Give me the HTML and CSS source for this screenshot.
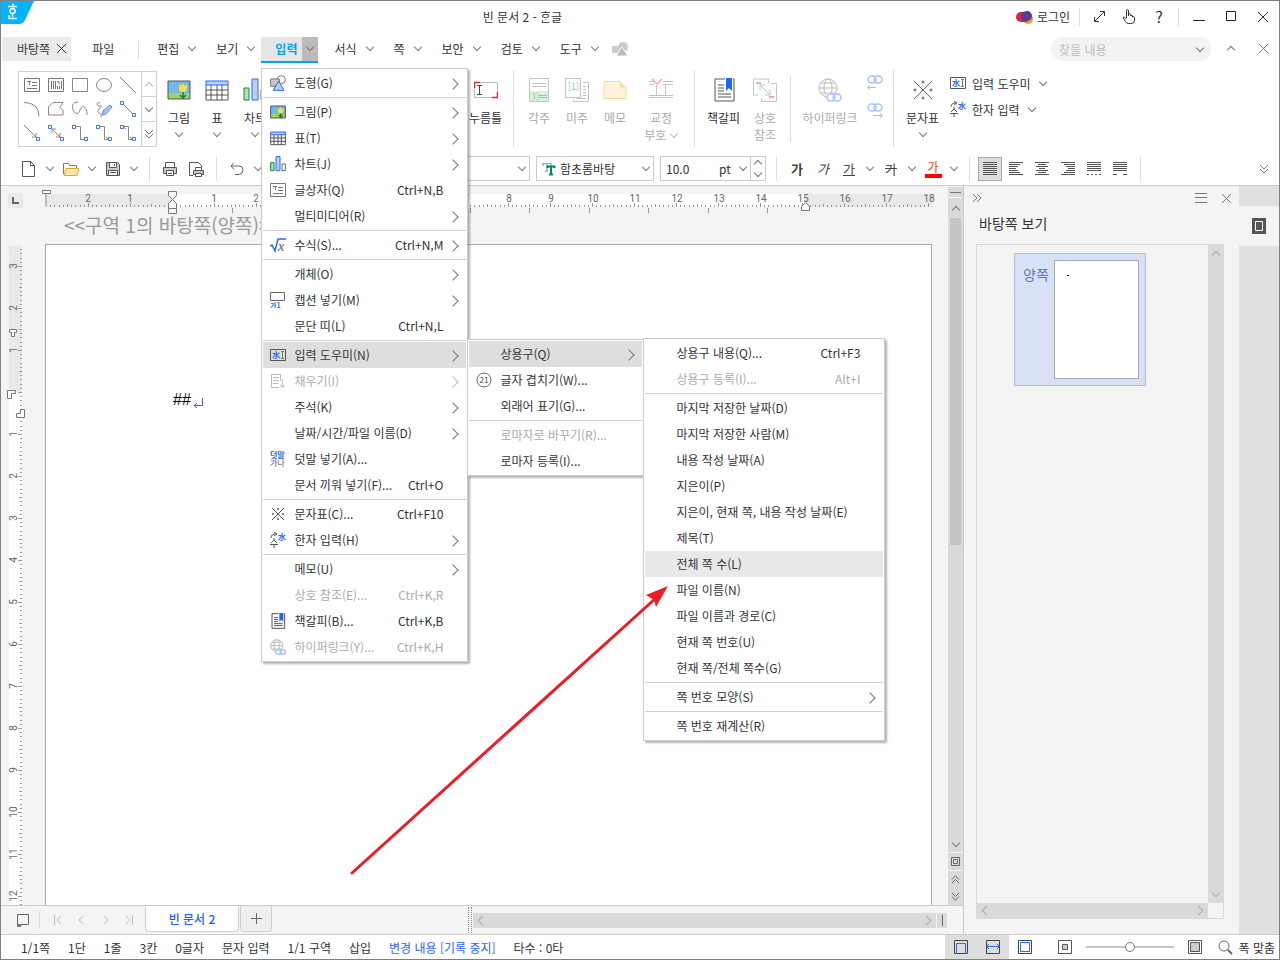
FILE: index.html
```html
<!DOCTYPE html>
<html lang="ko">
<head>
  <meta charset="UTF-8">
  <title>빈 문서 2 - 한글</title>
  <link rel="stylesheet" href="styles.css">
</head>
<body>

  <!-- icon sprite -->
  <svg class="sprite" width="0" height="0">
    <symbol id="i-shape" viewBox="0 0 24 24"><circle cx="17" cy="7" r="6" fill="#fff" stroke="#777"/><path d="M1 6h13v11H1z" fill="#c8c8c8" stroke="#777"/><path d="M13 9l8 14H5z" fill="#b9d0ff" stroke="#2a6bf2"/></symbol>
    <symbol id="i-picture" viewBox="0 0 24 24"><path d="M1 3h22v18H1z" fill="#6db9f0"/><path d="M1 15h22v6H1z" fill="#9ed267"/><path d="M16 13v8M16 20l-3-3M16 20l3-3" stroke="#15803a" stroke-width="1.500" fill="none"/><path d="M12 6l2 2 2-3 2 3 2-2v6l-2 2h-4l-2-2z" fill="#ffdf33"/><path d="M1 3h22v18H1z" fill="none" stroke="#555"/></symbol>
    <symbol id="i-table" viewBox="0 0 24 24"><path d="M1 7v15h22V7M1 12h22M1 17h22M6 7v15M12 7v15M17 7v15" fill="none" stroke="#555"/><path d="M1 3h22v4H1z" fill="#b9d0ff" stroke="#2a6bf2"/></symbol>
    <symbol id="i-chart" viewBox="0 0 24 24"><path d="M1 10h5v12H1z" fill="#b5e0bb" stroke="#188a2a"/><path d="M9 1h6v21H9z" fill="#b9d0ff" stroke="#2a6bf2"/><path d="M18 12h5v10h-5z" fill="#fff" stroke="#666"/></symbol>
    <symbol id="i-textbox" viewBox="0 0 16 16"><path d="M.5 1.500h15v13H.5zM3 4.500h4M5.500 5v3M8 5.500h5M8 8.500h5M3 11.500h10" fill="none" stroke="#777"/></symbol>
    <symbol id="i-vtext" viewBox="0 0 16 16"><path d="M.5 1.500h15v13H.5zM3.500 4v8M5.500 4v8M7.500 4v8M9.500 9v3M11.500 9v3M9 4.500h2v3M13.500 4v8" fill="none" stroke="#777"/></symbol>
    <symbol id="i-formula" viewBox="0 0 16 16"><path d="M0 9l2-1 3 6 3-12h8" fill="none" stroke="#2a6bf2" stroke-width="1.500"/><text x="8" y="14" font-size="14" font-style="italic" font-family="Liberation Serif, serif" fill="#555">x</text></symbol>
    <symbol id="i-caption" viewBox="0 0 16 16"><path d="M.5.5h14v8H.5z" fill="#fff" stroke="#666"/><text x="0" y="16" font-size="7" font-weight="bold" fill="#2a6bf2">가1</text></symbol>
    <symbol id="i-helper" viewBox="0 0 16 16"><path d="M.5 2.500h15v11H.5z" fill="none" stroke="#555"/><text x="2" y="11" font-size="8" font-weight="bold" fill="#2a6bf2">水</text><path d="M11 4.500h3M11 11.500h3M12.500 5v6" fill="none" stroke="#777"/></symbol>
    <symbol id="i-fill" viewBox="0 0 16 16"><path d="M9 14.500H1.500v-13h9V8M3 4.500h6M3 7.500h6M3 10.500h5" fill="none" stroke="#bbb"/><path d="M12.500 6v8M10 12l2.500 2.500L15 12" fill="none" stroke="#a9c3ff"/></symbol>
    <symbol id="i-ruby" viewBox="0 0 16 16"><text x="0" y="7" font-size="8" font-weight="bold" fill="#2a6bf2">덧말</text><text x="0" y="15" font-size="8" fill="#555">가나</text></symbol>
    <symbol id="i-chars" viewBox="0 0 16 16"><path d="M2 2l12 12M14 2L2 14" stroke="#555" fill="none"/><g fill="#555"><circle cx="8" cy="3" r="1"/><circle cx="8" cy="13" r="1"/><circle cx="3" cy="8" r="1"/><circle cx="13" cy="8" r="1"/></g></symbol>
    <symbol id="i-hanja" viewBox="0 0 16 16"><path d="M1 6c0-3 2-4 5-4M4 0l3 2-3 2" fill="none" stroke="#555"/><text x="8" y="8" font-size="8" font-weight="bold" fill="#2a6bf2">水</text><path d="M4 6v2L1 11M4 8l3 3M0 12.500h8M4 12v4" fill="none" stroke="#555"/></symbol>
    <symbol id="i-bookmark" viewBox="0 0 24 24"><path d="M13 1H3v22h19V1h-1M6 7h6M6 10h6M6 13h6M6 16h13M6 19h13" fill="none" stroke="#555"/><path d="M14 0h6v13l-3-3-3 3z" fill="#1f66ff"/></symbol>
    <symbol id="i-link" viewBox="0 0 24 24"><g fill="none" stroke="#bcbcbc"><circle cx="10" cy="10" r="9"/><ellipse cx="10" cy="10" rx="4" ry="9"/><path d="M1 10h18M3 5h14M3 15h14"/></g><path d="M8 16h16v8H8z" fill="#fff"/><g fill="none" stroke="#a9c3ff" stroke-width="1.500"><rect x="9" y="16" width="8" height="7" rx="3.500"/><rect x="15" y="16" width="8" height="7" rx="3.500"/></g></symbol>
    <symbol id="i-xref" viewBox="0 0 24 24"><path d="M5 17H0.500V1h15v4M18 5.500h5.500v18h-15v-3" fill="none" stroke="#c4c4c4"/><path d="M3 4h5v2H3zM16 18h5v2h-5z" fill="#f3aca4"/><path d="M8 8l8 8M7 12V7h5M17 12v5h-5" fill="none" stroke="#a9c3ff"/></symbol>
    <symbol id="i-links" viewBox="0 0 16 16"><g fill="none" stroke="#a9c3ff" stroke-width="1.500"><rect x="1" y="1" width="8" height="7" rx="3.500"/><rect x="7" y="1" width="8" height="7" rx="3.500"/></g></symbol>
    <symbol id="i-double" viewBox="0 0 10 10"><path d="M1 1l4 4 4-4M1 5l4 4 4-4" fill="none" stroke="currentColor"/></symbol>
    <symbol id="i-close" viewBox="0 0 12 12"><path d="M1 1l10 10M11 1L1 11" fill="none" stroke="currentColor"/></symbol>
  </svg>

  <header class="title-bar">
    <svg class="logo" width="33" height="23" viewBox="0 0 33 23"><path d="M0 0h33l-9 19q-2 4-6 4H0z" fill="#00b4ff"/><g fill="none" stroke="#fff" stroke-width="1.500"><path d="M11 3.500h2M7 5.500h9M11.500 13v3M8 14v3.500h8"/><circle cx="11.500" cy="10" r="2.500"/></g></svg>
    <h1>빈 문서 2 - ᄒᆞᆫ글</h1>
    <button class="login">
      <svg width="17" height="14" viewBox="0 0 17 14"><circle cx="12" cy="9" r="5" fill="#f79a1c"/><circle cx="5" cy="7" r="5" fill="#d8234a"/><path d="M5 2h6v10H5z" fill="#8a3478"/><circle cx="11" cy="6" r="5" fill="#553d9c"/></svg>
      로그인
    </button>
    <span class="sep"></span>
    <button class="tb-btn" aria-label="전체 화면"><svg width="13" height="13" viewBox="0 0 13 13"><path d="M1.500 11.500l10-10M7 1.500h4.500V6M1.500 7v4.500H6" fill="none" stroke="#333"/></svg></button>
    <button class="tb-btn" aria-label="터치"><svg width="14" height="15" viewBox="0 0 14 15"><path d="M4.500 9V2q0-1.500 1-1.500T6.500 2v5V5q2-1 2 .5v1q2-1 2 .5v1q2-1 2 .5v3q0 3-3 3h-3q-2 0-3-2L1 8.500q1-1.500 3.500 1.500" fill="none" stroke="#333"/></svg></button>
    <button class="tb-btn help" aria-label="도움말">?</button>
    <span class="sep"></span>
    <button class="win-btn" aria-label="최소화"><svg width="12" height="12"><path d="M0 9.500h12" stroke="#222"/></svg></button>
    <button class="win-btn" aria-label="최대화"><svg width="12" height="12"><path d="M1.500.5h9v9h-9z" fill="none" stroke="#222"/></svg></button>
    <button class="win-btn" aria-label="닫기"><svg width="12" height="12"><use href="#i-close"/></svg></button>
  </header>

  <nav class="menu-bar">
    <div class="doc-tab"><button>바탕쪽</button><button aria-label="닫기"><svg width="11" height="11"><use href="#i-close"/></svg></button></div>
    <button class="file">파일</button>
    <span class="sep"></span>
    <button class="top-item">편집<i class="chev"></i></button>
    <button class="top-item">보기<i class="chev"></i></button>
    <div class="top-active">
      <button class="name">입력</button>
      <button class="drop" aria-label="펼치기"><i class="chev"></i></button>

      <ul class="menu menu-main">
        <li><button class="has-sub"><svg><use href="#i-shape"/></svg><span>도형(G)</span></button></li>
        <li class="line"></li>
        <li><button class="has-sub"><svg><use href="#i-picture"/></svg><span>그림(P)</span></button></li>
        <li><button class="has-sub"><svg><use href="#i-table"/></svg><span>표(T)</span></button></li>
        <li><button class="has-sub"><svg><use href="#i-chart"/></svg><span>차트(J)</span></button></li>
        <li><button><svg><use href="#i-textbox"/></svg><span>글상자(Q)</span><kbd>Ctrl+N,B</kbd></button></li>
        <li><button class="has-sub"><span>멀티미디어(R)</span></button></li>
        <li class="line"></li>
        <li><button class="has-sub"><svg><use href="#i-formula"/></svg><span>수식(S)...</span><kbd>Ctrl+N,M</kbd></button></li>
        <li class="line"></li>
        <li><button class="has-sub"><span>개체(O)</span></button></li>
        <li><button class="has-sub"><svg><use href="#i-caption"/></svg><span>캡션 넣기(M)</span></button></li>
        <li><button><span>문단 띠(L)</span><kbd>Ctrl+N,L</kbd></button></li>
        <li class="line"></li>
        <li>
          <button class="has-sub open"><svg><use href="#i-helper"/></svg><span>입력 도우미(N)</span></button>
          <ul class="menu menu-helper">
            <li>
              <button class="has-sub open"><span>상용구(Q)</span></button>
              <ul class="menu menu-phrase">
                <li><button><span>상용구 내용(Q)...</span><kbd>Ctrl+F3</kbd></button></li>
                <li><button disabled><span>상용구 등록(I)...</span><kbd>Alt+I</kbd></button></li>
                <li class="line"></li>
                <li><button><span>마지막 저장한 날짜(D)</span></button></li>
                <li><button><span>마지막 저장한 사람(M)</span></button></li>
                <li><button><span>내용 작성 날짜(A)</span></button></li>
                <li><button><span>지은이(P)</span></button></li>
                <li><button><span>지은이, 현재 쪽, 내용 작성 날짜(E)</span></button></li>
                <li><button><span>제목(T)</span></button></li>
                <li><button class="hover"><span>전체 쪽 수(L)</span></button></li>
                <li><button><span>파일 이름(N)</span></button></li>
                <li><button><span>파일 이름과 경로(C)</span></button></li>
                <li><button><span>현재 쪽 번호(U)</span></button></li>
                <li><button><span>현재 쪽/전체 쪽수(G)</span></button></li>
                <li class="line"></li>
                <li><button class="has-sub"><span>쪽 번호 모양(S)</span></button></li>
                <li class="line"></li>
                <li><button><span>쪽 번호 재계산(R)</span></button></li>
              </ul>
            </li>
            <li><button><svg viewBox="0 0 16 16"><circle cx="8" cy="8" r="7" fill="none" stroke="#666"/><text x="8" y="11" font-size="8" text-anchor="middle" fill="#444">21</text></svg><span>글자 겹치기(W)...</span></button></li>
            <li><button><span>외래어 표기(G)...</span></button></li>
            <li class="line"></li>
            <li><button disabled><span>로마자로 바꾸기(R)...</span></button></li>
            <li><button><span>로마자 등록(I)...</span></button></li>
          </ul>
        </li>
        <li><button class="has-sub" disabled><svg><use href="#i-fill"/></svg><span>채우기(I)</span></button></li>
        <li><button class="has-sub"><span>주석(K)</span></button></li>
        <li><button class="has-sub"><span>날짜/시간/파일 이름(D)</span></button></li>
        <li><button><svg><use href="#i-ruby"/></svg><span>덧말 넣기(A)...</span></button></li>
        <li><button><span>문서 끼워 넣기(F)...</span><kbd>Ctrl+O</kbd></button></li>
        <li class="line"></li>
        <li><button><svg><use href="#i-chars"/></svg><span>문자표(C)...</span><kbd>Ctrl+F10</kbd></button></li>
        <li><button class="has-sub"><svg><use href="#i-hanja"/></svg><span>한자 입력(H)</span></button></li>
        <li class="line"></li>
        <li><button class="has-sub"><span>메모(U)</span></button></li>
        <li><button disabled><span>상호 참조(E)...</span><kbd>Ctrl+K,R</kbd></button></li>
        <li><button><svg><use href="#i-bookmark"/></svg><span>책갈피(B)...</span><kbd>Ctrl+K,B</kbd></button></li>
        <li><button disabled><svg><use href="#i-link"/></svg><span>하이퍼링크(Y)...</span><kbd>Ctrl+K,H</kbd></button></li>
      </ul>
    </div>
    <button class="top-item">서식<i class="chev"></i></button>
    <button class="top-item">쪽<i class="chev"></i></button>
    <button class="top-item">보안<i class="chev"></i></button>
    <button class="top-item">검토<i class="chev"></i></button>
    <button class="top-item">도구<i class="chev"></i></button>
    <svg class="shape-tool" width="16" height="15" viewBox="0 0 16 15"><circle cx="11" cy="5" r="5" fill="#ccc"/><path d="M0 4h9v7H0z" fill="#ccc"/><path d="M10 5l6 9H4z" fill="#bbb" stroke="#fff"/></svg>
    <div class="search">
      <input type="text" aria-label="찾을 내용" placeholder="찾을 내용">
      <i class="chev"></i>
    </div>
    <button class="bar-btn" aria-label="접기"><i class="chev up"></i></button>
    <button class="bar-btn" aria-label="닫기"><svg width="11" height="11"><use href="#i-close"/></svg></button>
  </nav>

  <section class="ribbon">
    <div class="gallery">
      <div class="shapes">
        <svg><use href="#i-textbox"/></svg>
        <svg><use href="#i-vtext"/></svg>
        <svg viewBox="0 0 16 16"><path d="M.5 1.500h15v13H.5z"/></svg>
        <svg viewBox="0 0 16 16"><ellipse cx="8" cy="8" rx="7.500" ry="6.500"/></svg>
        <svg viewBox="0 0 16 16"><path d="M0 0l16 16"/></svg>
        <svg viewBox="0 0 16 16"><path d="M0 1.500q15 0 15 14"/></svg>
        <svg viewBox="0 0 16 16"><path d="M5 1.500h10l-3 5 3 3v4.500H.5V6z"/></svg>
        <svg viewBox="0 0 16 16"><path d="M6 1C0 1 0 6 1 9s5 6 7 0 7-4 7 5"/></svg>
        <svg viewBox="0 0 16 16"><path d="M4 2C0 0 0 6 4 5s-3 4-2 6 4 0 3 5"/><path class="pen" d="M6 14l1-4 7-6 2 2-6 7z"/></svg>
        <svg viewBox="0 0 16 16"><path d="M2 2l12 12"/><path class="dot" d="M.5.5h3v3h-3zM12.500 12.500h3v3h-3z"/></svg>
        <svg viewBox="0 0 16 16"><path d="M0 0l12 12M12 8v4H8"/><path class="dot" d="M12.500 12.500h3v3h-3z"/></svg>
        <svg viewBox="0 0 16 16"><path d="M4 4l9 9M4 8V4h4M12 8v4H8"/><path class="dot" d="M.5.5h3v3h-3zM12.500 12.500h3v3h-3z"/></svg>
        <svg viewBox="0 0 16 16"><path d="M3 1.500h5.500v13H13"/><path class="dot" d="M.5.5h3v3h-3zM12.500 12.500h3v3h-3z"/></svg>
        <svg viewBox="0 0 16 16"><path d="M3 1.500h5.500v13H13M10 12l3 2.500"/><path class="dot" d="M.5.5h3v3h-3zM12.500 12.500h3v3h-3z"/></svg>
        <svg viewBox="0 0 16 16"><path d="M3 1.500h5.500v13H13M10 12l3 2.500M6 4L3 1.500"/><path class="dot" d="M.5.5h3v3h-3zM12.500 12.500h3v3h-3z"/></svg>
      </div>
      <div class="gallery-nav">
        <button aria-label="위로" disabled><i class="chev up"></i></button>
        <button aria-label="아래로"><i class="chev"></i></button>
        <button aria-label="자세히"><svg width="10" height="10"><use href="#i-double"/></svg></button>
      </div>
    </div>

    <div class="group media">
      <button class="big"><svg><use href="#i-picture"/></svg>그림<i class="chev"></i></button>
      <button class="big"><svg><use href="#i-table"/></svg>표<i class="chev"></i></button>
      <button class="big"><svg><use href="#i-chart"/></svg>차트<i class="chev"></i></button>
    </div>
    <div class="group fields">
      <button class="big"><svg viewBox="0 0 24 24"><path d="M.5 4.500h23v15H.5z" fill="none" stroke="#bbb"/><path d="M.5 10V4.500H6M23.500 14v5.500H18" fill="none" stroke="#e02b1d" stroke-width="1.500"/><path d="M3 7.500h5M3 16.500h5M5.500 8v8" stroke="#444"/></svg>누름틀</button>
    </div>
    <span class="sep"></span>
    <div class="group">
      <button class="big" disabled><svg viewBox="0 0 24 24"><path d="M3 1h18v22H3z" fill="#fff"/><path d="M3 13h18v10H3z" fill="#d9f0dc"/><path d="M2.500.5h19v23h-19zM5 5.500h14M5 8.500h14" fill="none" stroke="#c4c4c4"/><text x="5" y="21" font-size="8" fill="#8fce96">1)</text><path d="M12 17.500h8M12 19.500h8" stroke="#8fce96"/></svg>각주</button>
      <button class="big" disabled><svg viewBox="0 0 24 24"><path d="M.5.5h15v19H.5zM18 4.500h5.500v19h-15v-2M18 8.500h3M18 11.500h3M18 14.500h3M18 17.500h3M12 20.500h9" fill="none" stroke="#c4c4c4"/><text x="3" y="12" font-size="9" fill="#8fce96">[1]</text></svg>미주</button>
      <button class="big" disabled><svg viewBox="0 0 24 24"><path d="M1 3.500h16l6 6v11H1z" fill="#fff3dc" stroke="#f7dc98"/><path d="M17 3.500v6h6z" fill="#f7dc98"/></svg>메모</button>
      <button class="big proof" disabled><svg viewBox="0 0 24 24"><path d="M0 3.500h5M14 3.500h10M0 6.500h5M14 6.500h10M0 17.500h24M0 19.500h24M7.500 7v10M16.500 7v10" stroke="#c4c4c4"/><path d="M3 1l5 5 5-5" fill="none" stroke="#f3aca4" stroke-width="1.500"/></svg>교정<span>부호 <i class="chev"></i></span></button>
    </div>
    <span class="sep"></span>
    <div class="group">
      <button class="big wide"><svg><use href="#i-bookmark"/></svg>책갈피</button>
      <button class="big" disabled><svg><use href="#i-xref"/></svg>상호<span>참조</span></button>
    </div>
    <span class="sep short"></span>
    <div class="group">
      <button class="big link" disabled><svg><use href="#i-link"/></svg>하이퍼링크</button>
      <div class="link-nav">
        <button aria-label="이전 링크" disabled><svg viewBox="0 0 16 16"><use href="#i-links"/><path d="M9 12.500H1M3 10l-2.500 2.500L3 15" fill="none" stroke="#bcbcbc"/></svg></button>
        <button aria-label="다음 링크" disabled><svg viewBox="0 0 16 16"><use href="#i-links"/><path d="M6 12.500h9M13 10l2.500 2.500L13 15" fill="none" stroke="#bcbcbc"/></svg></button>
      </div>
    </div>
    <span class="sep"></span>
    <div class="group">
      <button class="big wide"><svg viewBox="0 0 24 24"><path d="M3 3l18 18M21 3L3 21" stroke="#666" fill="none"/><g fill="#fff" stroke="#555"><circle cx="12" cy="4" r="1"/><circle cx="12" cy="20" r="1"/><circle cx="4" cy="12" r="1"/><circle cx="20" cy="12" r="1"/></g></svg>문자표<i class="chev"></i></button>
      <div class="rows">
        <button><svg><use href="#i-helper"/></svg>입력 도우미<i class="chev"></i></button>
        <button><svg><use href="#i-hanja"/></svg>한자 입력<i class="chev"></i></button>
      </div>
    </div>
  </section>

  <section class="tool-bar">
    <button class="tool" aria-label="새 문서"><svg viewBox="0 0 16 16"><path d="M1.500.5h8l4 4v11h-12zM9.500.5v4h4" fill="none" stroke="#555"/></svg></button>
    <button class="more" aria-label="새 문서 옵션"><i class="chev"></i></button>
    <button class="tool" aria-label="열기"><svg viewBox="0 0 16 16"><path d="M.5 13V2.500h5l1 2h7V7" fill="none" stroke="#777"/><path d="M3 7.500h13l-2 7H1z" fill="#ffe6ac" stroke="#eaa821"/></svg></button>
    <button class="more" aria-label="열기 옵션"><i class="chev"></i></button>
    <button class="tool" aria-label="저장"><svg viewBox="0 0 16 16"><path d="M1.500 1.500h11l2 2v11h-13z" fill="#c8c8c8" stroke="#555"/><path d="M4.500 1.500h7v5h-7zM3.500 9.500h9v5h-9z" fill="#fff" stroke="#555"/><path d="M5 11.500h6M9.500 3v2" stroke="#555"/></svg></button>
    <button class="more" aria-label="저장 옵션"><i class="chev"></i></button>
    <span class="sep"></span>
    <button class="tool" aria-label="인쇄"><svg viewBox="0 0 16 16"><path d="M1.500 6.500h13v6h-13z" fill="#c8c8c8" stroke="#555"/><path d="M3.500 1.500h9v5h-9zM4.500 9.500h7v5h-7z" fill="#fff" stroke="#555"/><path d="M6 12.500h4" stroke="#555"/></svg></button>
    <button class="tool" aria-label="미리 보기"><svg viewBox="0 0 16 16"><path d="M5 14.500H1.500v-13h9l3 3V6" fill="none" stroke="#555"/><path d="M5.500 9.500h10v4h-10z" fill="#c8c8c8" stroke="#555"/><path d="M7.500 6.500h6v3h-6zM7.500 12.500h6v3h-6z" fill="#fff" stroke="#555"/></svg></button>
    <span class="sep"></span>
    <button class="tool" aria-label="되돌리기"><svg viewBox="0 0 16 16"><path d="M5 1.500L2 5l3 3.500M2 5h8q4 0 4 4t-4 4.500H6" fill="none" stroke="#666"/></svg></button>
    <button class="more" aria-label="되돌리기 옵션"><i class="chev"></i></button>
    <div class="combo style-combo"><select aria-label="스타일"><option>바탕글</option></select><i class="chev"></i></div>
    <div class="combo font-combo">
      <svg width="14" height="14" viewBox="0 0 14 14"><path d="M1 4V1.500h8V4M5 1.500V9M3 9h3" fill="none" stroke="#7fc8a9" stroke-width="1.500"/><path d="M5.500 6V4.500h7V6M9 4v8M7 12.500h4" fill="none" stroke="#00876a" stroke-width="2"/></svg>
      <select aria-label="글꼴"><option>함초롬바탕</option></select><i class="chev"></i>
    </div>
    <div class="combo size-combo">
      <input type="text" aria-label="글자 크기" value="10.0">
      <select aria-label="단위"><option>pt</option></select><i class="chev"></i>
      <div class="spin"><button aria-label="크게"><i class="chev up"></i></button><button aria-label="작게"><i class="chev"></i></button></div>
    </div>
    <span class="sep"></span>
    <button class="tool bold">가</button>
    <button class="tool italic">가</button>
    <button class="tool under">가</button>
    <button class="more" aria-label="밑줄 옵션"><i class="chev"></i></button>
    <button class="tool strike">가</button>
    <button class="more" aria-label="취소선 옵션"><i class="chev"></i></button>
    <button class="tool color"><span>가</span></button>
    <button class="more" aria-label="글자 색 옵션"><i class="chev"></i></button>
    <span class="sep"></span>
    <div class="aligns">
      <button class="on" aria-label="양쪽 정렬"><svg width="14" height="14"><path d="M0 .5h14M0 2.500h14M0 4.500h14M0 6.500h14M0 8.500h14M0 10.500h14M0 12.500h14"/></svg></button>
      <button aria-label="왼쪽 정렬"><svg width="14" height="14"><path d="M0 .5h14M0 2.500h11M0 4.500h9M0 6.500h7M0 8.500h9M0 10.500h11M0 12.500h14"/></svg></button>
      <button aria-label="가운데 정렬"><svg width="14" height="14"><path d="M0 .5h14M3 2.500h8M1 4.500h12M4 6.500h6M1 8.500h12M3 10.500h8M0 12.500h14"/></svg></button>
      <button aria-label="오른쪽 정렬"><svg width="14" height="14"><path d="M0 .5h14M3 2.500h11M5 4.500h9M7 6.500h7M5 8.500h9M3 10.500h11M0 12.500h14"/></svg></button>
      <button aria-label="배분 정렬"><svg width="14" height="14"><path d="M0 .5h14M0 2.500h14M0 4.500h14M0 6.500h14M0 8.500h14M0 12.500h2M4 12.500h2M8 12.500h2M12 12.500h2"/></svg></button>
      <button aria-label="나눔 정렬"><svg width="14" height="14"><path d="M0 .5h14M0 2.500h14M0 4.500h14M0 6.500h14M0 8.500h14M0 12.500h4M10 12.500h4"/></svg></button>
    </div>
    <span class="sep"></span>
    <button class="tool last" aria-label="더 보기"><svg class="dbl" viewBox="0 0 10 10"><use href="#i-double"/></svg></button>
  </section>

  <main class="workspace">
    <section class="editor">
      <div class="editor-body">
        <div class="left-col">
          <button class="corner" aria-label="탭 종류"><svg width="7" height="7"><path d="M1 0v6h6" fill="none" stroke="#666" stroke-width="2"/></svg></button>
          <svg class="v-ruler">
            <defs>
              <pattern id="vt" y="20" width="4" height="42" patternUnits="userSpaceOnUse"><path d="M0 0h4v1H0zM2 4h2v1H2zM2 8h2v1H2zM2 13h2v1H2zM2 17h2v1H2zM1 21h3v1H1zM2 25h2v1H2zM2 29h2v1H2zM2 34h2v1H2zM2 38h2v1H2z" fill="#999"/></pattern>
            </defs>
            <rect x="2" width="13" height="100%" fill="#fff"/>
            <rect x="2" width="13" height="146" fill="#e9e9e9"/>
            <g transform="translate(11 0)"><rect y="3" width="4" height="100%" fill="url(#vt)"/></g>
            <g class="nums">
              <text transform="translate(10 20) rotate(-90)">3</text><text transform="translate(10 62) rotate(-90)">2</text><text transform="translate(10 104) rotate(-90)">1</text>
              <text transform="translate(10 188) rotate(-90)">1</text><text transform="translate(10 230) rotate(-90)">2</text><text transform="translate(10 272) rotate(-90)">3</text><text transform="translate(10 314) rotate(-90)">4</text><text transform="translate(10 356) rotate(-90)">5</text><text transform="translate(10 398) rotate(-90)">6</text><text transform="translate(10 440) rotate(-90)">7</text><text transform="translate(10 482) rotate(-90)">8</text><text transform="translate(10 524) rotate(-90)">9</text><text transform="translate(10 566) rotate(-90)">10</text><text transform="translate(10 608) rotate(-90)">11</text><text transform="translate(10 650) rotate(-90)">12</text>
            </g>
            <path d="M2.500 83.500h7v3h-2v4h-3v-4h-2zM.5 144.500h8v3h-4v5h-4zM17.500 163.500v8h-8v-4h4v-4z" fill="#fff" stroke="#777"/>
          </svg>
        </div>
        <div class="sheet">
          <svg class="h-ruler">
            <defs>
              <pattern id="ht" x="5" width="42" height="4" patternUnits="userSpaceOnUse"><path d="M0 0h1v4H0zM4 2h1v2H4zM8 2h1v2H8zM13 2h1v2h-1zM17 2h1v2h-1zM21 1h1v3h-1zM25 2h1v2h-1zM29 2h1v2h-1zM34 2h1v2h-1zM38 2h1v2h-1z" fill="#999"/></pattern>
            </defs>
            <rect x="4" y="8" width="887" height="13" fill="#e9e9e9"/>
            <rect x="131" y="8" width="633" height="13" fill="#fff"/>
            <g transform="translate(0 17)"><rect x="6" width="884" height="4" fill="url(#ht)"/></g>
            <g class="nums">
              <text x="47" y="16">2</text><text x="89" y="16">1</text><text x="173" y="16">1</text><text x="215" y="16">2</text><text x="257" y="16">3</text><text x="299" y="16">4</text><text x="341" y="16">5</text><text x="383" y="16">6</text><text x="425" y="16">7</text><text x="468" y="16">8</text><text x="510" y="16">9</text><text x="552" y="16">10</text><text x="594" y="16">11</text><text x="636" y="16">12</text><text x="678" y="16">13</text><text x="720" y="16">14</text><text x="762" y="16">15</text><text x="804" y="16">16</text><text x="846" y="16">17</text><text x="888" y="16">18</text>
            </g>
            <path d="M191.500 22v5M251.500 22v5M310.500 22v5M370.500 22v5M429.500 22v5M488.500 22v5M548.500 22v5M607.500 22v5M667.500 22v5M726.500 22v5" stroke="#999"/>
            <path d="M4 8h2v13H4z" fill="#bbb"/>
            <path d="M1.500 4.500h8v3h-8zM127.500 5.500h8v4l-4 4-4-4zM131.500 13.500l4 4v5h-8v-5zM127.500 22.500h8v5h-8zM764.500 16.500l4 4v4h-8v-4z" fill="#fff" stroke="#777"/>
          </svg>
          <p class="master-label">&lt;&lt;구역 1의 바탕쪽(양쪽)&gt;&gt;</p>
          <div class="page">##<svg width="11" height="10"><path d="M9.500 0v7.500H1M4 5L1 7.500 4 10" fill="none" stroke="#3b63dc"/></svg></div>
        </div>
        <div class="v-scroll">
          <button class="split" aria-label="창 나누기"></button>
          <div class="track">
            <button aria-label="위로"><i class="chev up"></i></button>
            <div class="thumb"></div>
            <button aria-label="아래로"><i class="chev"></i></button>
          </div>
          <button class="pick" aria-label="찾기 개체"><svg width="9" height="9"><path d="M.5.5h8v8h-8zM2.500 2.500h4v4h-4z" fill="none" stroke="#666"/></svg></button>
          <div class="jump">
            <button aria-label="이전 쪽"><svg class="flip" width="9" height="9"><use href="#i-double"/></svg></button>
            <button aria-label="다음 쪽"><svg width="9" height="9"><use href="#i-double"/></svg></button>
          </div>
        </div>
      </div>

      <div class="doc-tabs">
        <button class="list" aria-label="문서 목록"><svg width="12" height="13"><path d="M.5.5h11v10H5l-2 2H.5z" fill="none" stroke="#666"/><path d="M0 10h5v1l-2 2H0z" fill="#777"/></svg></button>
        <span class="sep"></span>
        <button class="nav" aria-label="처음"><svg width="9" height="10"><path d="M1.500 0v10M8 1L4 5l4 4"/></svg></button>
        <button class="nav" aria-label="이전"><svg width="9" height="10"><path d="M6 1L2 5l4 4"/></svg></button>
        <button class="nav" aria-label="다음"><svg width="9" height="10"><path d="M3 1l4 4-4 4"/></svg></button>
        <button class="nav" aria-label="마지막"><svg width="9" height="10"><path d="M1 1l4 4-4 4M7.500 0v10"/></svg></button>
        <button class="tab">빈 문서 2</button>
        <button class="add" aria-label="새 탭"><svg width="11" height="11"><path d="M5.500 0v11M0 5.500h11" stroke="#666"/></svg></button>
        <div class="h-area">
          <span class="grip"></span>
          <div class="h-scroll"><i class="chev left"></i><i class="chev right"></i></div>
          <button class="h-split" aria-label="창 나누기"></button>
        </div>
      </div>
    </section>

    <aside class="panel">
      <div class="panel-top">
        <button aria-label="접기"><svg class="turn" width="10" height="10"><use href="#i-double"/></svg></button>
        <button class="burger" aria-label="메뉴"><svg width="12" height="10"><path d="M0 .5h12M0 4.500h12M0 9.500h12" stroke="#777"/></svg></button>
        <button aria-label="닫기"><svg width="11" height="11"><use href="#i-close"/></svg></button>
      </div>
      <h2>바탕쪽 보기</h2>
      <div class="frame">
        <div class="list-area">
          <div class="thumb-card"><span>양쪽</span><div class="mini"></div></div>
        </div>
        <div class="side-scroll"><i class="chev up"></i><i class="chev"></i></div>
        <div class="foot-scroll"><i class="chev left"></i><i class="chev right"></i></div>
      </div>
    </aside>
    <div class="dock">
      <button aria-label="바탕쪽"><svg width="14" height="16"><path d="M0 0h14v16H0z" fill="#555"/><path d="M3.500 3.500h7v9h-7z" fill="none" stroke="#fff"/></svg></button>
    </div>
  </main>

  <footer class="status-bar">
    <span>1/1쪽</span><span>1단</span><span>1줄</span><span>3칸</span><span>0글자</span><span>문자 입력</span><span>1/1 구역</span><span>삽입</span>
    <a href="#">변경 내용 [기록 중지]</a>
    <span>타수 : 0타</span>
    <div class="views">
      <button class="on" aria-label="쪽 윤곽"><svg width="14" height="14"><path d="M.5.5h13v13H.5z" fill="none" stroke="#444"/><path d="M2.500 14V3.500h9V14" fill="none" stroke="#2a6bf2"/></svg></button>
      <button class="on" aria-label="폭 맞춤"><svg width="14" height="14"><path d="M.5.5h13v13H.5z" fill="none" stroke="#444"/><path d="M0 6.500h14M3 4L.5 6.500 3 9M11 4l2.500 2.500L11 9" fill="none" stroke="#2a6bf2"/></svg></button>
      <button aria-label="쪽 맞춤"><svg width="14" height="14"><path d="M.5.5h13v13H.5z" fill="none" stroke="#444"/><path d="M2.500 2.500h9v9h-9z" fill="none" stroke="#2a6bf2"/></svg></button>
    </div>
    <button class="zoom-btn" aria-label="축소"><svg width="14" height="14"><path d="M.5.5h13v13H.5z" fill="none" stroke="#555"/><path d="M4.500 4.500h5v5h-5z" fill="#ccc" stroke="#555"/></svg></button>
    <input class="zoom" type="range" min="0" max="100" value="51" aria-label="확대/축소">
    <button class="zoom-btn" aria-label="확대"><svg width="14" height="14"><path d="M.5.5h13v13H.5z" fill="none" stroke="#555"/><path d="M2.500 2.500h9v9h-9z" fill="#ccc" stroke="#555"/></svg></button>
    <button class="fit"><svg width="15" height="15"><circle cx="6" cy="6" r="5" fill="none" stroke="#666"/><path d="M10 10l4 4" stroke="#666" stroke-width="2"/></svg>폭 맞춤</button>
  </footer>

  <svg class="pointer" width="340" height="310" viewBox="340 570 340 310"><path d="M352 873L656 598" stroke="#ee1c24" stroke-width="3" stroke-linecap="round"/><path d="M668 586l-22 9 8 5 2 7z" fill="#ee1c24"/></svg>

</body>
</html>
```

FILE: styles.css
```css
* {
  box-sizing: border-box;
}
body {
  margin: 0;
  height: 100vh;
  display: flex;
  flex-direction: column;
  overflow: hidden;
  position: relative;
  border: 1px solid #7f7f7f;
  background: #fff;
  color: #333;
  font: 12px/17px "Noto Sans CJK KR", sans-serif;
}
button, input, select, kbd {
  font: inherit;
  color: inherit;
}
button {
  display: flex;
  align-items: center;
  justify-content: center;
  padding: 0;
  border: none;
  background: none;
  white-space: nowrap;
}
h1, h2, p, ul {
  margin: 0;
  padding: 0;
  font-weight: normal;
}
svg {
  flex: none;
}
.sprite {
  display: none;
}
symbol * {
  vector-effect: non-scaling-stroke;
}
.sep {
  flex: none;
  width: 1px;
  background: #ddd;
}

/* small arrows */
.chev {
  flex: none;
  display: inline-block;
  width: 6px;
  height: 6px;
  margin: 0 1px 3px;
  border: solid #777;
  border-width: 0 1px 1px 0;
  transform: rotate(45deg);
}
.chev.up {
  margin: 3px 1px 0;
  transform: rotate(225deg);
}
.chev.left, .chev.right {
  width: 7px;
  height: 7px;
  margin: 0 2px;
  border-color: #aaa;
  transform: rotate(135deg);
}
.chev.right {
  transform: rotate(-45deg);
}

/* title bar */
.title-bar {
  flex: none;
  display: flex;
  align-items: center;
  height: 36px;
  padding-bottom: 5px;
}
.title-bar .logo {
  align-self: flex-start;
}
.title-bar h1 {
  flex: 1;
  padding-right: 5px;
  text-align: center;
  font-size: 12px;
  line-height: 17px;
}
.title-bar .sep {
  height: 18px;
  margin: 0 4px;
}
.login {
  gap: 4px;
  margin-right: 5px;
}
.tb-btn {
  width: 30px;
  height: 30px;
}
.help {
  font-size: 16px;
}
.win-btn {
  width: 32px;
  height: 30px;
}

/* menu bar */
.menu-bar {
  flex: none;
  display: flex;
  align-items: flex-start;
  height: 26px;
}
.menu-bar button {
  height: 24px;
  padding-bottom: 2px;
}
.doc-tab {
  display: flex;
  align-items: center;
  gap: 6px;
  margin-left: 1px;
  padding: 0 4px 0 15px;
  background: #ebebeb;
}
.menu-bar .file {
  padding: 0 21px 2px;
}
.menu-bar .sep {
  height: 18px;
  margin: 4px 8px 0 3px;
}
.menu-bar .top-item {
  gap: 9px;
  padding: 0 10px 2px;
}
.top-active {
  position: relative;
  z-index: 5;
  display: flex;
  margin: 0 6px 0 -4px;
  border-bottom: 2px solid #00a5f0;
}
.top-active .name {
  width: 41px;
  padding-left: 9px;
  background: #e6e6e6;
  color: #00a5f0;
  font-weight: bold;
}
.top-active .drop {
  width: 16px;
  background: #bbb;
}
.shape-tool {
  margin: 5px 0 0 3px;
}
.search {
  display: flex;
  align-items: center;
  width: 160px;
  height: 24px;
  margin-left: auto;
  margin-right: 4px;
  padding: 0 7px 0 8px;
  border-radius: 12px;
  background: #f3f3f3;
}
.search input {
  flex: 1;
  min-width: 0;
  padding: 0;
  border: none;
  background: none;
  outline: none;
}
.search input::placeholder {
  color: #bbb;
}
.bar-btn {
  width: 32px;
  color: #777;
}

/* drop-down menus */
.menu {
  position: absolute;
  list-style: none;
  padding: 1px;
  border: 1px solid #ccc;
  background: #fff;
  box-shadow: 2px 2px 2px rgba(0, 0, 0, 0.3);
}
.menu li {
  position: relative;
}
.menu .line {
  height: 1px;
  margin: 1px 0;
  background: #d0d0d0;
}
.menu button {
  position: relative;
  justify-content: flex-start;
  width: 100%;
  height: 26px;
  padding: 0 23px 2px 31px;
}
.menu button svg {
  width: 16px;
  height: 16px;
  margin: 2px 8px 0 -24px;
}
.menu kbd {
  margin-left: auto;
}
.menu .open {
  background: #dedede;
}
.menu .hover {
  background: #e9e9e9;
}
.menu button:disabled {
  color: #aaa;
}
.has-sub::after {
  content: "";
  position: absolute;
  right: 9px;
  top: 10px;
  width: 7px;
  height: 7px;
  border: solid #777;
  border-width: 1px 1px 0 0;
  transform: rotate(45deg);
}
.has-sub:disabled::after {
  border-color: #bbb;
}
.menu-main {
  top: 31px;
  left: 0;
  width: 207px;
}
.menu-helper {
  top: -3px;
  left: calc(100% + 1px);
  width: 177px;
}
.menu-phrase {
  top: -3px;
  left: calc(100% + 1px);
  width: 242px;
}

/* ribbon */
.ribbon {
  flex: none;
  display: flex;
  height: 89px;
}
.ribbon .sep {
  height: 77px;
  margin: 7px 6px 0;
}
.ribbon .sep.short {
  height: 66px;
  margin-top: 13px;
}
.group {
  display: flex;
}
.gallery {
  display: flex;
  width: 139px;
  height: 76px;
  margin: 8px 0 0 17px;
  border: 1px solid #d0d0d0;
}
.shapes {
  flex: 1;
  display: grid;
  grid-template-columns: repeat(5, 24px);
  grid-auto-rows: 24px;
  padding: 1px;
  place-items: center;
}
.shapes svg {
  width: 16px;
  height: 16px;
  fill: none;
  stroke: #888;
}
.shapes .dot {
  fill: #fff;
  stroke: #3f74f0;
}
.shapes .pen {
  fill: #a9c3ff;
  stroke: #5b86e8;
}
.gallery-nav {
  width: 15px;
  display: flex;
  flex-direction: column;
  border-left: 1px solid #d0d0d0;
  color: #777;
}
.gallery-nav button {
  flex: 1;
}
.gallery-nav button + button {
  border-top: 1px solid #d0d0d0;
}
:disabled .chev {
  border-color: #bbb;
}
.media {
  margin-left: 3px;
}
.fields {
  margin-left: 190px;
}
.big {
  width: 38px;
  flex-direction: column;
  justify-content: flex-start;
  padding-top: 15px;
}
.big svg {
  width: 24px;
  height: 24px;
  margin-bottom: 7px;
}
.big > .chev {
  margin-top: 4px;
}
.big:disabled {
  color: #aaa;
}
.fields .big {
  width: 43px;
}
.proof {
  width: 54px;
}
.wide {
  width: 45px;
}
.link {
  width: 66px;
}
.link-nav {
  width: 24px;
  padding-top: 12px;
}
.link-nav button {
  width: 24px;
  height: 28px;
  align-items: flex-start;
}
.link-nav svg, .rows svg {
  width: 16px;
  height: 16px;
}
.rows {
  margin-left: 5px;
  padding-top: 7px;
}
.rows button {
  gap: 6px;
  height: 26px;
}
.rows .chev {
  margin-left: 3px;
}

/* formatting bar */
.tool-bar {
  flex: none;
  display: flex;
  align-items: center;
  height: 33px;
  padding-left: 15px;
}
.tool-bar .sep {
  height: 24px;
  margin: 0 7px;
}
.tool {
  width: 26px;
  height: 24px;
}
.tool svg {
  width: 16px;
  height: 16px;
}
.tool .dbl {
  width: 10px;
  height: 10px;
  color: #777;
}
.tool.last {
  margin: 0 2px 0 auto;
}
.more {
  width: 16px;
  height: 24px;
}
.combo {
  display: flex;
  align-items: center;
  height: 25px;
  margin-right: 6px;
  padding: 0 3px 0 5px;
  border: 1px solid #ccc;
}
.combo select, .combo input {
  flex: 1;
  min-width: 0;
  padding: 0;
  border: none;
  background: none;
  appearance: none;
  outline: none;
}
.style-combo {
  width: 254px;
  margin-left: 10px;
}
.font-combo {
  width: 118px;
  gap: 4px;
}
.size-combo {
  width: 106px;
  margin-right: 3px;
  padding-right: 0;
}
.size-combo select {
  flex: none;
  width: 20px;
}
.spin {
  display: flex;
  flex-direction: column;
  width: 15px;
  height: 100%;
  margin-left: 3px;
  border-left: 1px solid #ccc;
}
.spin button {
  flex: 1;
}
.bold, .italic, .under, .strike {
  font-size: 13px;
  color: #444;
}
.bold {
  font-weight: bold;
}
.italic {
  font-style: italic;
}
.under {
  text-decoration: underline;
}
.strike {
  text-decoration: line-through;
}
.color span {
  width: 17px;
  height: 18px;
  border-bottom: 4px solid #f00;
  color: #e0412b;
  line-height: 13px;
}
.aligns {
  display: flex;
  gap: 2px;
  padding: 0 1px;
}
.aligns button {
  width: 24px;
  height: 24px;
}
.aligns .on {
  border: 1px solid #aaa;
  background: #dedede;
}
.aligns path {
  stroke: #555;
}

/* work area */
.workspace {
  flex: 1;
  min-height: 0;
  display: flex;
  border-top: 1px solid #ccc;
  background: #f4f4f4;
}
.editor {
  flex: 1;
  min-width: 0;
  display: flex;
  flex-direction: column;
  border-right: 1px solid #ccc;
}
.editor-body {
  flex: 1;
  min-height: 0;
  display: flex;
}
.left-col {
  width: 40px;
  display: flex;
  flex-direction: column;
  padding: 7px 0 0 6px;
}
.corner {
  flex: none;
  width: 15px;
  height: 15px;
  margin: 0 0 38px 1px;
  background: #e9e9e9;
}
.v-ruler {
  flex: 1;
  width: 20px;
  min-height: 0;
}
.nums {
  font: 10px Roboto, sans-serif;
  fill: #666;
  text-anchor: middle;
}
.sheet {
  flex: 1;
  min-width: 0;
  display: flex;
  flex-direction: column;
}
.h-ruler {
  width: 100%;
  height: 30px;
}
.master-label {
  flex: none;
  height: 28px;
  padding-left: 23px;
  color: #999;
  font-size: 19px;
  line-height: 18px;
}
.page {
  flex: 1;
  margin: 0 16px 0 4px;
  padding: 146px 0 0 127px;
  border: 1px solid #a9a9a9;
  border-bottom: none;
  background: #fff;
  color: #000;
  font: 16px/18px "Liberation Sans", sans-serif;
}
.page svg {
  margin-left: 2px;
  vertical-align: -3px;
}
.v-scroll {
  width: 15px;
  display: flex;
  flex-direction: column;
  gap: 1px;
  padding-top: 1px;
  color: #666;
}
.v-scroll button {
  width: 100%;
}
.split {
  height: 10px;
  background: #dadada;
}
.split::before {
  content: "";
  width: 11px;
  height: 1px;
  background: #777;
}
.track {
  flex: 1;
  display: flex;
  flex-direction: column;
  background: #dadada;
}
.track button {
  height: 20px;
}
.track button:last-child {
  margin-top: auto;
  height: 16px;
}
.track .thumb {
  width: 11px;
  height: 50%;
  margin: 0 2px;
  background: #c4c4c4;
}
.pick {
  height: 17px;
  background: #dadada;
}
.jump {
  background: #dadada;
}
.jump button {
  height: 17px;
}
.flip {
  transform: rotate(180deg);
}

/* document tabs */
.doc-tabs {
  flex: none;
  display: flex;
  align-items: center;
  height: 29px;
  border-top: 1px solid #ccc;
}
.doc-tabs .list {
  width: 38px;
  padding-left: 6px;
}
.doc-tabs .sep {
  height: 18px;
  margin-right: 5px;
}
.doc-tabs .nav {
  width: 24px;
}
.nav path {
  fill: none;
  stroke: #bbb;
}
.doc-tabs .tab {
  width: 94px;
  height: 26px;
  align-self: flex-start;
  margin: 0 1px 0 4px;
  border: 1px solid #d0d0d0;
  border-top: none;
  border-radius: 0 0 4px 4px;
  background: #fff;
  color: #1f5fff;
  font-weight: 500;
}
.doc-tabs .add {
  width: 32px;
  height: 26px;
  align-self: flex-start;
  border: 1px solid #d0d0d0;
  border-top: none;
  border-radius: 0 0 4px 4px;
  background: #efefef;
}
.h-area {
  flex: 1;
  height: 100%;
  display: flex;
  align-items: center;
  margin-left: 196px;
  padding-right: 16px;
}
.grip {
  width: 4px;
  height: 26px;
  border: dotted #888;
  border-width: 0 1px;
}
.h-scroll {
  flex: 1;
  display: flex;
  align-items: center;
  justify-content: space-between;
  height: 15px;
  margin: 0 1px;
  padding: 0 4px;
  background: #dadada;
}
.h-split {
  width: 10px;
  height: 15px;
  background: #dadada;
}
.h-split::before {
  content: "";
  width: 1px;
  height: 11px;
  background: #666;
}

/* side panel */
.panel {
  flex: none;
  width: 275px;
  display: flex;
  flex-direction: column;
  padding-bottom: 15px;
}
.panel-top {
  display: flex;
  align-items: center;
  gap: 14px;
  height: 24px;
  padding: 0 7px 0 8px;
  color: #777;
}
.burger {
  margin-left: auto;
}
.turn {
  transform: rotate(-90deg);
}
.panel h2 {
  padding: 3px 0 0 15px;
  height: 34px;
  font-size: 14px;
  line-height: 20px;
}
.frame {
  flex: 1;
  display: grid;
  grid-template: 1fr 15px / 1fr 15px;
  margin: 0 15px 0 12px;
  border: 1px solid #d9d9d9;
}
.list-area {
  padding: 8px 0 0 37px;
}
.thumb-card {
  display: flex;
  justify-content: space-between;
  width: 132px;
  height: 133px;
  padding: 6px;
  padding-left: 8px;
  border: 1px solid #b0bde4;
  background: #d9e1f7;
  color: #5a78cc;
  font-size: 14px;
  line-height: 28px;
}
.mini {
  width: 85px;
  height: 119px;
  padding: 14px 12px;
  border: 1px solid #aaa;
  background: #fff;
}
.mini::before {
  content: "";
  display: block;
  width: 2px;
  height: 1px;
  background: #000;
}
.side-scroll, .foot-scroll {
  display: flex;
  align-items: center;
  justify-content: space-between;
  background: #dadada;
}
.side-scroll {
  flex-direction: column;
  padding: 4px 0;
}
.side-scroll .chev {
  border-color: #aaa;
}
.foot-scroll {
  padding: 0 4px;
}
.dock {
  flex: none;
  width: 40px;
  padding-top: 20px;
  background: #e0e0e0;
}
.dock button {
  width: 100%;
  height: 40px;
  background: #f4f4f4;
}

/* status bar */
.status-bar {
  flex: none;
  display: flex;
  align-items: center;
  gap: 18px;
  height: 25px;
  padding: 0 4px 0 20px;
  border-top: 1px solid #ccc;
  white-space: nowrap;
}
.status-bar a {
  color: #1f5fff;
  text-decoration: none;
}
.views {
  display: flex;
  margin: 0 -1px 0 auto;
}
.views button {
  width: 32px;
  height: 24px;
}
.views .on {
  background: #dedede;
}
.zoom-btn {
  width: 14px;
}
.zoom {
  width: 88px;
  height: 12px;
  margin: 0 -4px;
  appearance: none;
  background: linear-gradient(#c4c4c4, #c4c4c4) center / 100% 2px no-repeat;
}
.zoom::-webkit-slider-thumb {
  appearance: none;
  width: 10px;
  height: 10px;
  border: 1px solid #777;
  border-radius: 50%;
  background: #fff;
}
.fit {
  gap: 6px;
  margin-left: -2px;
}

/* red pointer over the open menus */
.pointer {
  position: absolute;
  left: 339px;
  top: 569px;
  z-index: 10;
  pointer-events: none;
}
```
